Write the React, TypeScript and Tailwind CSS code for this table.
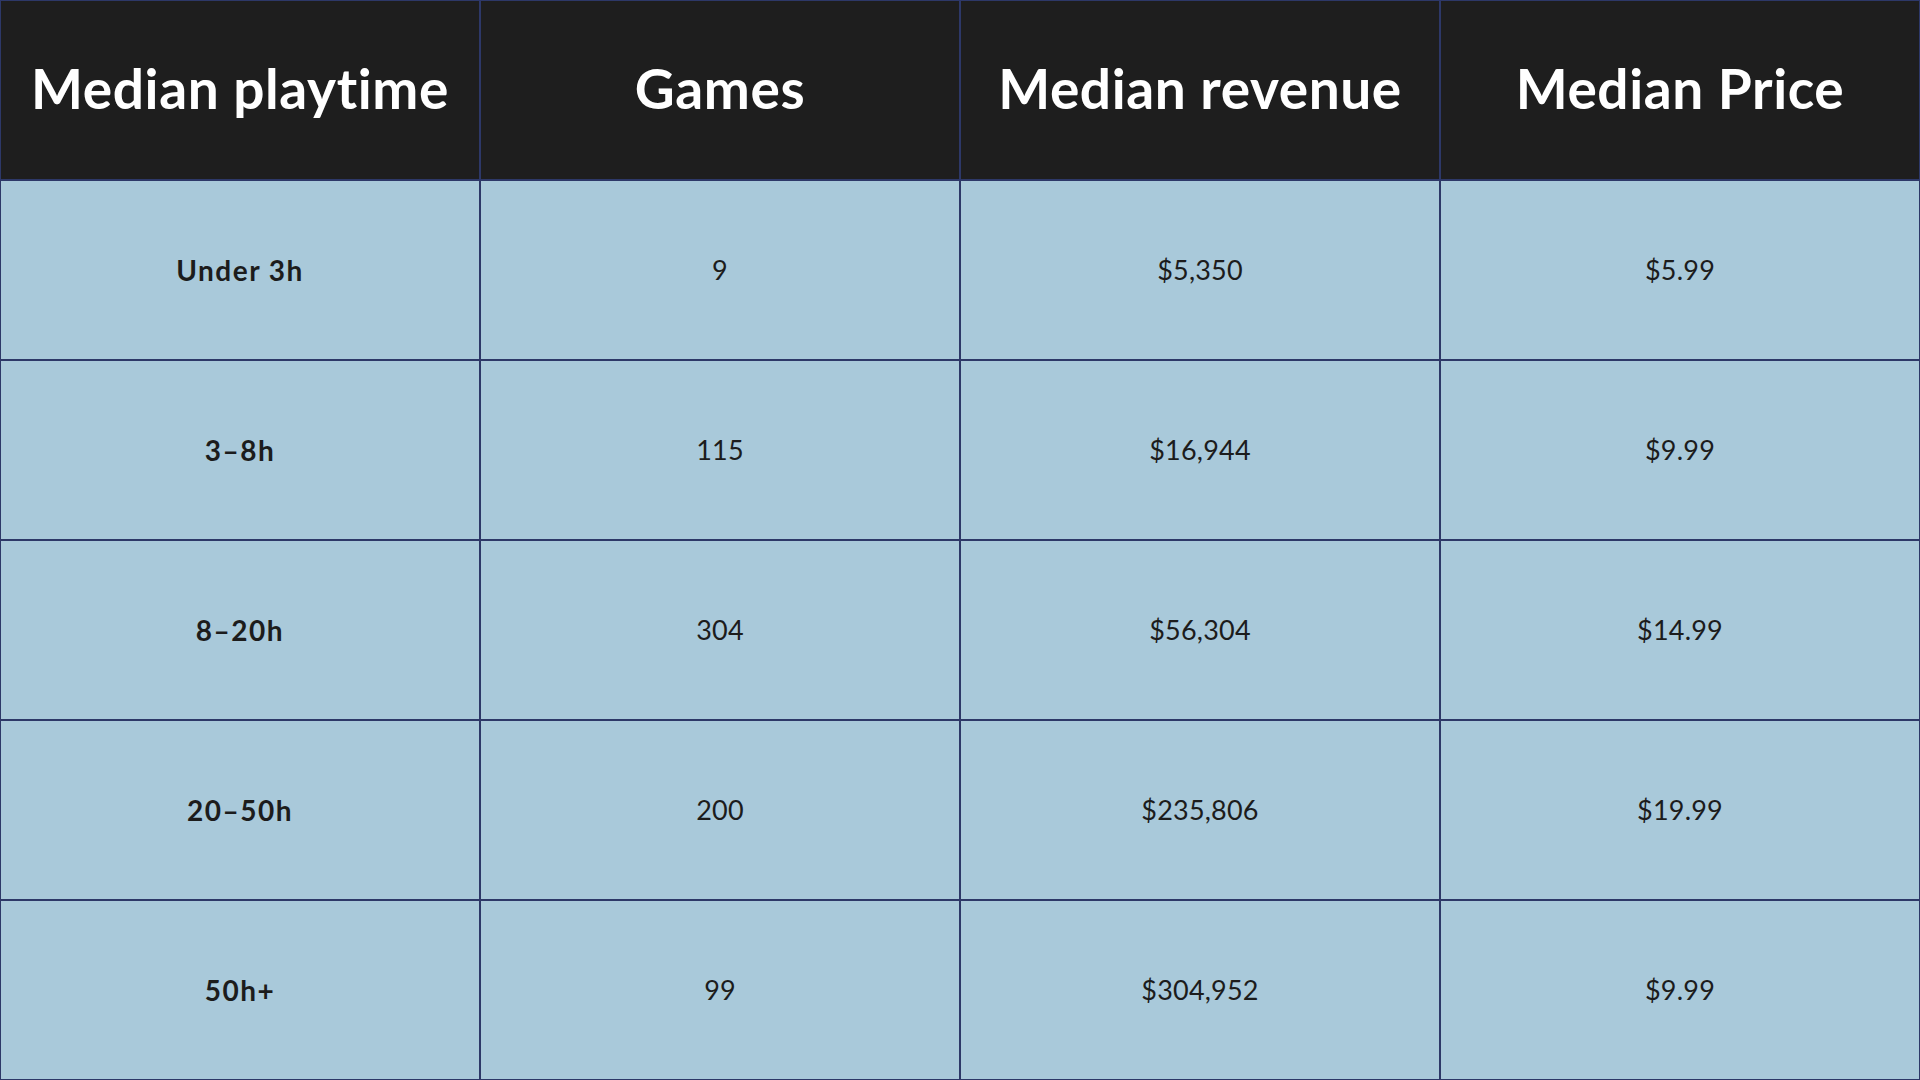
const headers = ['Median playtime', 'Games', 'Median revenue', 'Median Price'];

const rows = [
  ['Under 3h', '9', '$5,350', '$5.99'],
  ['3–8h', '115', '$16,944', '$9.99'],
  ['8–20h', '304', '$56,304', '$14.99'],
  ['20–50h', '200', '$235,806', '$19.99'],
  ['50h+', '99', '$304,952', '$9.99'],
];

export default function App() {
  return (
    <div className="w-[1920px] h-[1080px] bg-[#2d3868] p-[1px] grid grid-cols-4 grid-rows-6 gap-[2px] font-['Lato',sans-serif]">
      {headers.map((h) => (
        <div key={h} className="bg-[#1e1e1e] flex items-center justify-center pb-[3px] text-white font-bold text-[55px] tracking-[0.6px]">
          {h}
        </div>
      ))}
      {rows.map((row) =>
        row.map((cell, i) => (
          <div
            key={row[0] + i}
            className={`bg-[#a9c9da] flex items-center justify-center text-[#1c1c1c] ${
              i === 0 ? 'font-bold text-[28px] tracking-[1.5px]' : 'font-normal text-[27px] tracking-[0.2px]'
            }`}
          >
            {cell}
          </div>
        ))
      )}
    </div>
  );
}
